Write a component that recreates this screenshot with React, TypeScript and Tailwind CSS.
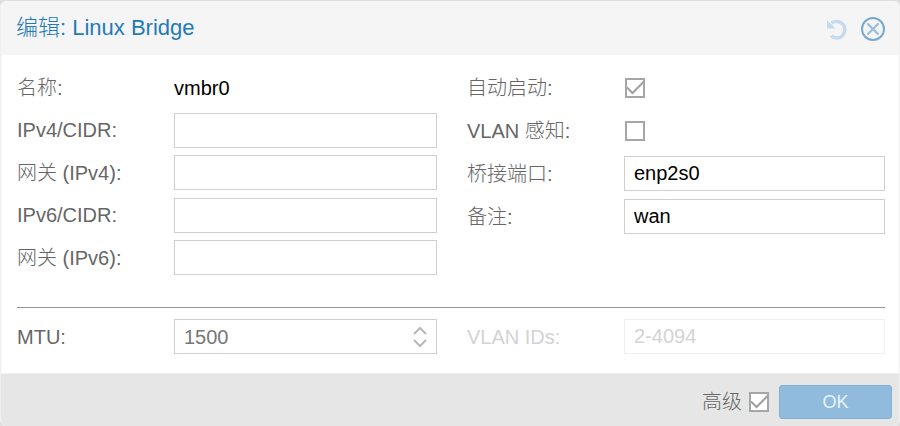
import type { ReactNode } from 'react';

const columns = 'grid grid-cols-[420fr_418fr] gap-x-[30px]';
const inputStyle =
  'h-[35px] w-full min-w-0 flex-1 border border-[#cfcfcf] bg-white px-[9px] text-[20px] text-black outline-none placeholder:text-[#777777] disabled:border-[#efefef] disabled:placeholder:text-[#d3d3d3]';

function Field({ id, label, muted = false, children }: { id: string; label: string; muted?: boolean; children: ReactNode }) {
  return (
    <div className="flex h-[35px] items-center">
      <label htmlFor={id} className={`w-[157px] shrink-0 whitespace-nowrap ${muted ? 'text-[#d3d3d3]' : 'text-[#666666]'}`}>
        {label}
      </label>
      {children}
    </div>
  );
}

function Checkbox({ id, checked = false }: { id: string; checked?: boolean }) {
  return (
    <span className="relative block size-5">
      <input
        id={id}
        type="checkbox"
        defaultChecked={checked}
        className="peer block size-5 appearance-none border-2 border-[#a6a6a6] bg-white"
      />
      <svg viewBox="0 0 20 20" className="pointer-events-none absolute inset-0 hidden size-5 peer-checked:block" fill="none" stroke="#a0a0a0" strokeWidth="2">
        <path d="M2 9.5 7.500 15 18.500 4" />
      </svg>
    </span>
  );
}

export default function App() {
  return (
    <div className="bg-[#dedede] pt-px font-['Liberation_Sans','Noto_Sans_CJK_SC',sans-serif] text-[20px] leading-6 font-light">
      <form className="overflow-hidden rounded-md border-x border-[#f0f0f0] bg-[#f5f5f5]" onSubmit={(e) => e.preventDefault()}>
        <header className="flex h-[54px] items-center justify-between pr-[13px] pl-[15px]">
          <h1 className="text-[22px] leading-7 font-light text-[#1f7ab8]">编辑: Linux Bridge</h1>
          <div className="flex items-center gap-3 pt-0.5">
            <button type="button" aria-label="重置" className="block">
              <svg viewBox="0 0 24 24" className="size-6" fill="none">
                <path d="M7.500 6.200A8.300 8.300 0 1 1 7 18.800" stroke="#c3dbec" strokeWidth="3.400" />
                <path d="M3 3v8.500h8.500z" fill="#c3dbec" />
              </svg>
            </button>
            <button type="button" aria-label="关闭" className="block">
              <svg viewBox="0 0 26 26" className="size-[26px]" fill="none" strokeLinecap="round">
                <circle cx="13" cy="13" r="11" stroke="#76a9cf" strokeWidth="2" />
                <path d="m8 8 10 10M18 8 8 18" stroke="#98bddf" strokeWidth="2.200" />
              </svg>
            </button>
          </div>
        </header>

        <main className="ml-px bg-white pr-[14px] pb-[19px] pl-[15px] pt-[15px]">
          <div className={columns}>
            <div className="flex h-[205px] flex-col justify-between">
              <Field id="name" label="名称:">
                <output id="name" className="text-black">vmbr0</output>
              </Field>
              <Field id="ipv4" label="IPv4/CIDR:">
                <input id="ipv4" className={inputStyle} />
              </Field>
              <Field id="gateway4" label="网关 (IPv4):">
                <input id="gateway4" className={inputStyle} />
              </Field>
              <Field id="ipv6" label="IPv6/CIDR:">
                <input id="ipv6" className={inputStyle} />
              </Field>
              <Field id="gateway6" label="网关 (IPv6):">
                <input id="gateway6" className={inputStyle} />
              </Field>
            </div>
            <div className="flex flex-col gap-2">
              <Field id="autostart" label="自动启动:">
                <div className="pl-px">
                  <Checkbox id="autostart" checked />
                </div>
              </Field>
              <Field id="vlan-aware" label="VLAN 感知:">
                <div className="pl-px">
                  <Checkbox id="vlan-aware" />
                </div>
              </Field>
              <Field id="ports" label="桥接端口:">
                <input id="ports" defaultValue="enp2s0" className={inputStyle} />
              </Field>
              <Field id="comment" label="备注:">
                <input id="comment" defaultValue="wan" className={inputStyle} />
              </Field>
            </div>
          </div>

          <hr className="mt-8 mb-[11px] border-t border-[#969696]" />

          <div className={columns}>
            <Field id="mtu" label="MTU:">
              <div className="flex h-[35px] min-w-0 flex-1 border border-[#cfcfcf]">
                <input id="mtu" placeholder="1500" inputMode="numeric" className="w-full min-w-0 flex-1 px-[9px] outline-none placeholder:text-[#777777]" />
                <div className="flex w-8 flex-col items-center justify-center gap-1">
                  <button type="button" aria-label="增加" className="block">
                    <svg viewBox="0 0 14 9" className="h-[9px] w-[14px]" fill="none" stroke="#b8b8b8" strokeWidth="2">
                      <path d="m1 8 6-6 6 6" />
                    </svg>
                  </button>
                  <button type="button" aria-label="减少" className="block">
                    <svg viewBox="0 0 14 9" className="h-[9px] w-[14px]" fill="none" stroke="#b8b8b8" strokeWidth="2">
                      <path d="m1 1 6 6 6-6" />
                    </svg>
                  </button>
                </div>
              </div>
            </Field>
            <Field id="vlan-ids" label="VLAN IDs:" muted>
              <input id="vlan-ids" placeholder="2-4094" disabled className={inputStyle} />
            </Field>
          </div>
        </main>

        <footer className="flex h-[53px] items-center justify-end border-t border-[#f0f0f0] bg-[#e6e6e6] pt-[3px] pr-[7px]">
          <label htmlFor="advanced" className="mr-[7px] text-[#666666]">高级</label>
          <Checkbox id="advanced" checked />
          <button type="submit" className="ml-[10px] h-[34px] w-[113px] rounded-[3px] border border-[#82b2d6] bg-[#90bbdd] text-[18px] text-[#e8f2f9]">
            OK
          </button>
        </footer>
      </form>
    </div>
  );
}
